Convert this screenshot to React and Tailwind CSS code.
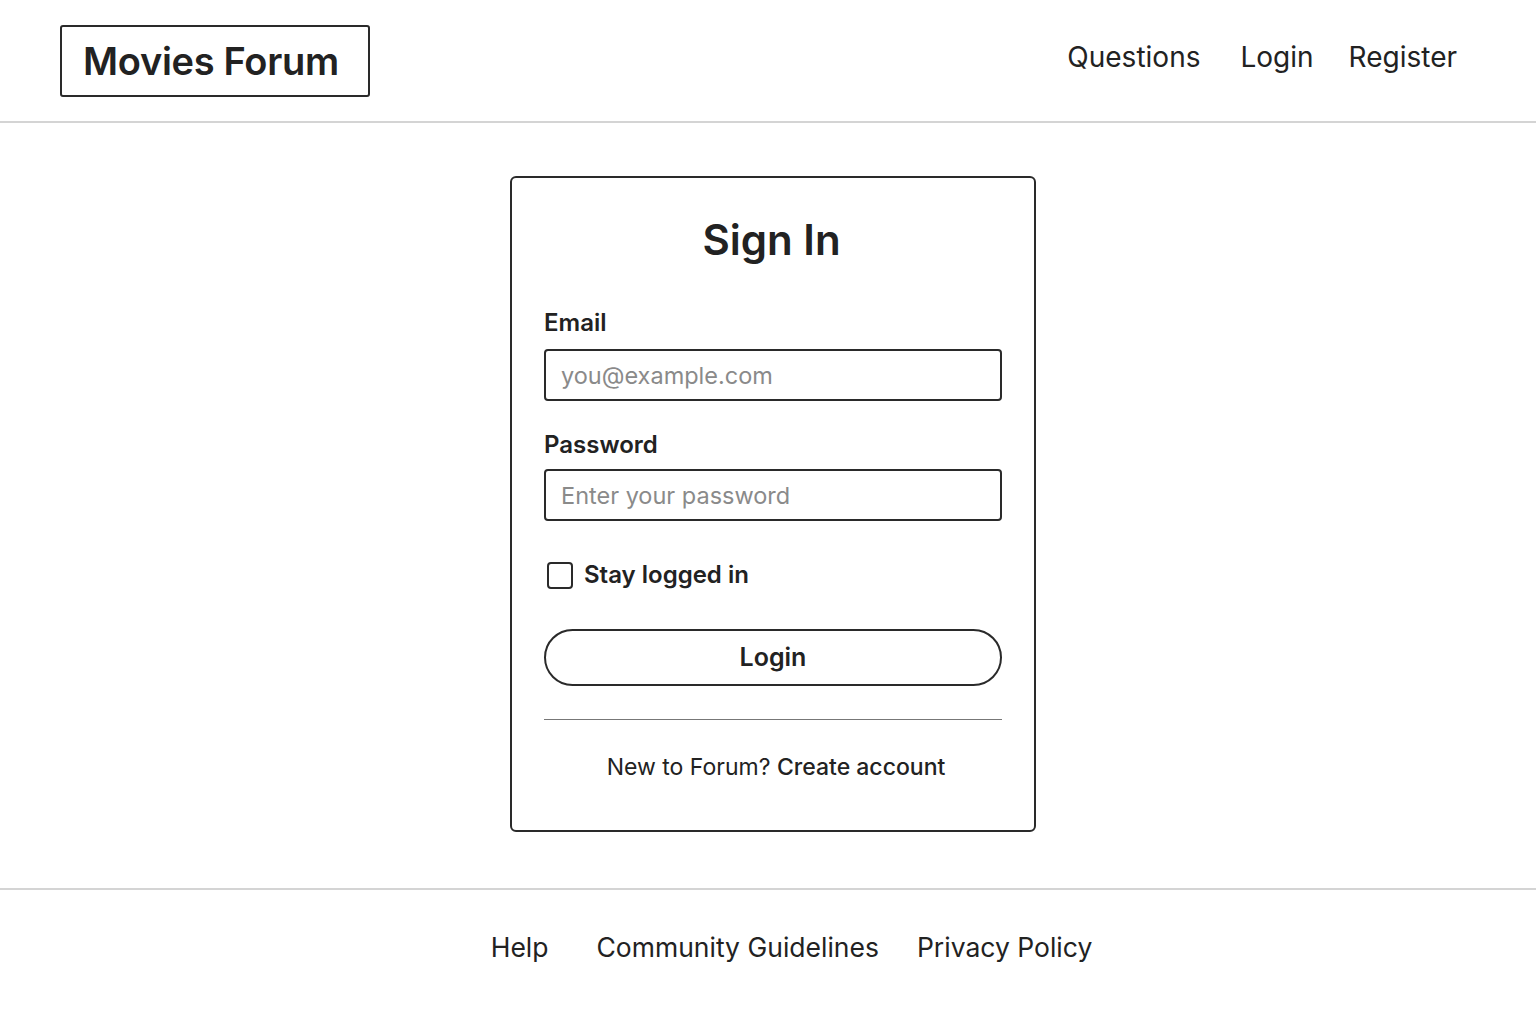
export default function App() {
  return (
    <div className="min-h-screen bg-white text-[#222] flex flex-col" style={{ fontFamily: 'Inter, "Noto Sans", sans-serif' }}>
      <header className="h-[123px] flex items-center justify-between pl-[60px] pr-[79px] border-b-2 border-[#d4d4d4]">
        <div className="border-2 border-[#2a2a2a] rounded-[3px] w-[310px] h-[72px] flex items-center pl-[21px]">
          <h1 className="text-[38px] font-semibold tracking-[-0.3px] leading-none">Movies Forum</h1>
        </div>
        <nav className="flex items-center text-[28px] text-[#222] mb-[8px]">
          <a href="#" className="mr-[40px]">Questions</a>
          <a href="#" className="mr-[35px]">Login</a>
          <a href="#">Register</a>
        </nav>
      </header>

      <main className="flex justify-center pt-[53px] pb-[56px] pl-[10px]">
        <div className="w-[526px] border-2 border-[#2a2a2a] rounded-[6px] px-[32px] pt-[41px] pb-[45px]">
          <h2 className="text-[42px] font-semibold text-center leading-none mb-[50px] pr-[3px]">Sign In</h2>

          <label className="block text-[24px] font-semibold leading-none mb-[14px]">Email</label>
          <input
            type="email"
            placeholder="you@example.com"
            className="w-full h-[52px] border-2 border-[#2a2a2a] rounded-[4px] px-[15px] text-[23.5px] placeholder:text-[#8a8a8a] outline-none"
          />

          <label className="block text-[24px] font-semibold leading-none mt-[32px] mb-[12px]">Password</label>
          <input
            type="password"
            placeholder="Enter your password"
            className="w-full h-[52px] border-2 border-[#2a2a2a] rounded-[4px] px-[15px] text-[23.5px] placeholder:text-[#8a8a8a] outline-none"
          />

          <label className="flex items-center mt-[36px] ml-[3px] cursor-pointer">
            <span className="w-[26px] h-[27px] border-2 border-[#2a2a2a] rounded-[4px] mr-[11px]"></span>
            <span className="text-[24px] font-semibold">Stay logged in</span>
          </label>

          <button className="w-full h-[57px] mt-[36px] border-2 border-[#2a2a2a] rounded-full text-[25px] font-semibold">
            Login
          </button>

          <div className="h-px bg-[#777] mt-[33px]"></div>

          <p className="text-center text-[23px] mt-[30px] pl-[6px]">
            New to Forum? <a href="#" className="font-medium">Create account</a>
          </p>
        </div>
      </main>

      <footer className="border-t-2 border-[#d4d4d4] flex-1 flex justify-center items-start pt-[38px] pl-[47px]">
        <nav className="flex text-[26.5px] text-[#222]">
          <a href="#" className="mr-[48px]">Help</a>
          <a href="#" className="mr-[38px]">Community Guidelines</a>
          <a href="#">Privacy Policy</a>
        </nav>
      </footer>
    </div>
  );
}
